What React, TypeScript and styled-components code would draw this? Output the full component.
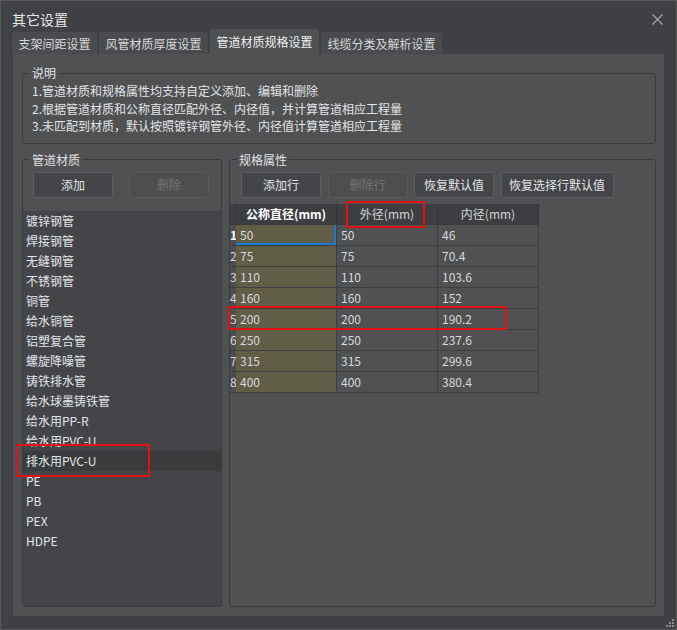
import * as React from "react";
import styled, { createGlobalStyle, css } from "styled-components";

const GlobalStyle = createGlobalStyle`
  html, body {
    margin: 0;
    padding: 0;
    background: #404144;
  }
`;

const FONT = `"Microsoft YaHei", "Noto Sans CJK SC", "Noto Sans", sans-serif`;

const tabs = ["支架间距设置", "风管材质厚度设置", "管道材质规格设置", "线缆分类及解析设置"];

const notes = [
  "1.管道材质和规格属性均支持自定义添加、编辑和删除",
  "2.根据管道材质和公称直径匹配外径、内径值，并计算管道相应工程量",
  "3.未匹配到材质，默认按照镀锌钢管外径、内径值计算管道相应工程量"
];

const materials = [
  "镀锌钢管",
  "焊接钢管",
  "无缝钢管",
  "不锈钢管",
  "铜管",
  "给水铜管",
  "铝塑复合管",
  "螺旋降噪管",
  "铸铁排水管",
  "给水球墨铸铁管",
  "给水用PP-R",
  "给水用PVC-U",
  "排水用PVC-U",
  "PE",
  "PB",
  "PEX",
  "HDPE"
];

const specs = [
  ["50", "50", "46"],
  ["75", "75", "70.4"],
  ["110", "110", "103.6"],
  ["160", "160", "152"],
  ["200", "200", "190.2"],
  ["250", "250", "237.6"],
  ["315", "315", "299.6"],
  ["400", "400", "380.4"]
];

const Window = styled.div`
  position: relative;
  width: 677px;
  height: 630px;
  box-sizing: border-box;
  border: 1px solid #57585a;
  background: #404144;
  display: flex;
  flex-direction: column;
  overflow: hidden;
  font-family: ${FONT};
  font-size: 12px;
  color: #e2e4e6;
`;

const TitleBar = styled.div`
  height: 28px;
  flex-shrink: 0;
  box-sizing: border-box;
  padding: 10px 13px 0 11px;
  display: flex;
  justify-content: space-between;
  align-items: flex-start;
`;

const Title = styled.div`
  font-size: 14px;
  line-height: 17px;
  color: #e6e6e6;
`;

const CloseIcon = styled.svg`
  margin-top: 3px;
  width: 11px;
  height: 11px;
`;

const TabRow = styled.div`
  height: 25px;
  flex-shrink: 0;
  display: flex;
  align-items: flex-end;
  gap: 2px;
  padding-left: 11px;
`;

const Tab = styled.div<{ $active?: boolean }>`
  height: ${(p) => (p.$active ? 25 : 22)}px;
  box-sizing: border-box;
  padding: 0 6.5px;
  display: flex;
  align-items: center;
  border-radius: 3px 3px 0 0;
  background: ${(p) => (p.$active ? "#505153" : "#4a4b4e")};
  color: ${(p) => (p.$active ? "#eeeeee" : "#d6d7d9")};
  white-space: nowrap;
`;

const Panel = styled.div`
  flex: 1;
  margin: 0 11px 12px;
  box-sizing: border-box;
  border: 1px solid #3c3d3f;
  border-top: none;
  background: #505153;
  padding: 11px 8px 9px 9px;
  display: flex;
  flex-direction: column;
  gap: 8px;
  min-height: 0;
`;

const GroupBox = styled.fieldset<{ $width?: number; $grow?: boolean }>`
  box-sizing: border-box;
  margin: 0;
  padding: 0;
  min-width: 0;
  min-height: 0;
  border: 1px solid #3a3b3d;
  border-radius: 3px;
  display: flex;
  flex-direction: column;
  flex: ${(p) => (p.$grow ? "1 1 0" : "none")};
  ${(p) =>
    p.$width &&
    css`
      width: ${p.$width}px;
    `}
`;

const Legend = styled.legend`
  margin-left: 7px;
  padding: 0 2px;
  line-height: 16px;
  font-size: 12px;
  color: #e0e2e4;
`;

const NoteBody = styled.div`
  padding: 1px 9px 8px;
`;

const NoteLine = styled.div`
  line-height: 17.5px;
  white-space: nowrap;
`;

const LowerRow = styled.div`
  flex: 1;
  display: flex;
  gap: 7px;
  min-height: 0;
`;

const ButtonRow = styled.div<{ $gap: number; $left: number }>`
  display: flex;
  flex-shrink: 0;
  gap: ${(p) => p.$gap}px;
  padding: 4px 0 0 ${(p) => p.$left}px;
`;

const Button = styled.button<{ $width?: number }>`
  width: ${(p) => p.$width ?? 80}px;
  height: 26px;
  box-sizing: border-box;
  padding: 0;
  border: 1px solid #5e5f62;
  border-radius: 3px;
  background: #444548;
  color: #e2e4e6;
  font-family: ${FONT};
  font-size: 12px;

  &:disabled {
    background: #4d4e50;
    border-color: #58595b;
    color: #727375;
  }
`;

const MaterialList = styled.div`
  margin-top: 13px;
  flex: 1;
  min-height: 0;
  overflow: hidden;
  background: #444548;
  border-radius: 0 0 2px 2px;
`;

const MaterialItem = styled.div<{ $selected?: boolean }>`
  height: 20px;
  line-height: 20px;
  padding-left: 3px;
  white-space: nowrap;
  color: #e2e6ea;
  background: ${(p) => (p.$selected ? "#3a3b3d" : "transparent")};
`;

const Grid = styled.div`
  margin-top: 6px;
  display: grid;
  grid-template-columns: 6px 101px 101px 101px;
  grid-auto-rows: 21px;
  width: max-content;
`;

const HeadCell = styled.div<{ $bold?: boolean }>`
  box-sizing: border-box;
  border-right: 1px solid #333436;
  border-bottom: 1px solid #3a3b3d;
  background: #3d3e41;
  display: flex;
  align-items: center;
  justify-content: center;
  white-space: nowrap;
  font-weight: ${(p) => (p.$bold ? 700 : 400)};
  color: ${(p) => (p.$bold ? "#ffffff" : "#d2d4d6")};
`;

const RowHead = styled.div<{ $current?: boolean }>`
  box-sizing: border-box;
  overflow: hidden;
  border-bottom: 1px solid #3e3f41;
  background: #4c4d4f;
  line-height: 20px;
  white-space: nowrap;
  font-weight: ${(p) => (p.$current ? 700 : 400)};
  color: ${(p) => (p.$current ? "#ffffff" : "#d6d8da")};
`;

const Cell = styled.div<{ $key?: boolean; $focus?: boolean }>`
  box-sizing: border-box;
  border-right: 1px solid #3e3f41;
  border-bottom: 1px solid #3e3f41;
  padding-left: 4px;
  line-height: 20px;
  white-space: nowrap;
  color: #d8dadc;
  background: ${(p) => (p.$key ? "#605e47" : "#505153")};
  ${(p) =>
    p.$focus &&
    css`
      box-shadow: inset -2px -2px 0 #1b7bd3;
    `}
`;

const Mark = styled.div<{ $x: number; $y: number; $w: number; $h: number }>`
  position: absolute;
  left: ${(p) => p.$x}px;
  top: ${(p) => p.$y}px;
  width: ${(p) => p.$w}px;
  height: ${(p) => p.$h}px;
  box-sizing: border-box;
  border: 2px solid #e31212;
  pointer-events: none;
`;

const Grip = styled.svg`
  position: absolute;
  right: 2px;
  bottom: 2px;
  width: 8px;
  height: 8px;
`;

export default function App() {
  return (
    <>
      <GlobalStyle />
      <Window>
        <TitleBar>
          <Title>其它设置</Title>
          <CloseIcon viewBox="0 0 11 11">
            <path d="M0.5 0.5 L10.5 10.5 M10.5 0.5 L0.5 10.5" stroke="#a3a4a6" strokeWidth="1.3" fill="none" />
          </CloseIcon>
        </TitleBar>

        <TabRow>
          {tabs.map((t, i) => (
            <Tab key={t} $active={i === 2}>
              {t}
            </Tab>
          ))}
        </TabRow>

        <Panel>
          <GroupBox>
            <Legend>说明</Legend>
            <NoteBody>
              {notes.map((n) => (
                <NoteLine key={n}>{n}</NoteLine>
              ))}
            </NoteBody>
          </GroupBox>

          <LowerRow>
            <GroupBox $width={200}>
              <Legend>管道材质</Legend>
              <ButtonRow $gap={16} $left={10}>
                <Button>添加</Button>
                <Button disabled>删除</Button>
              </ButtonRow>
              <MaterialList>
                {materials.map((m, i) => (
                  <MaterialItem key={m} $selected={i === 12}>
                    {m}
                  </MaterialItem>
                ))}
              </MaterialList>
            </GroupBox>

            <GroupBox $grow>
              <Legend>规格属性</Legend>
              <ButtonRow $gap={6.5} $left={11}>
                <Button>添加行</Button>
                <Button disabled>删除行</Button>
                <Button>恢复默认值</Button>
                <Button $width={113}>恢复选择行默认值</Button>
              </ButtonRow>
              <Grid>
                <HeadCell />
                <HeadCell $bold>公称直径(mm)</HeadCell>
                <HeadCell>外径(mm)</HeadCell>
                <HeadCell>内径(mm)</HeadCell>
                {specs.map((row, r) => (
                  <React.Fragment key={r}>
                    <RowHead $current={r === 0}>{r + 1}</RowHead>
                    <Cell $key $focus={r === 0}>
                      {row[0]}
                    </Cell>
                    <Cell>{row[1]}</Cell>
                    <Cell>{row[2]}</Cell>
                  </React.Fragment>
                ))}
              </Grid>
            </GroupBox>
          </LowerRow>
        </Panel>

        <Mark $x={345} $y={200} $w={79} $h={27} />
        <Mark $x={227} $y={305} $w={279} $h={24} />
        <Mark $x={15} $y={443} $w={134} $h={33} />

        <Grip viewBox="0 0 8 8">
          <rect x="6" y="0" width="2" height="2" fill="#8c8d8f" />
          <rect x="3" y="3" width="2" height="2" fill="#8c8d8f" />
          <rect x="6" y="3" width="2" height="2" fill="#8c8d8f" />
          <rect x="0" y="6" width="2" height="2" fill="#8c8d8f" />
          <rect x="3" y="6" width="2" height="2" fill="#8c8d8f" />
          <rect x="6" y="6" width="2" height="2" fill="#8c8d8f" />
        </Grip>
      </Window>
    </>
  );
}
